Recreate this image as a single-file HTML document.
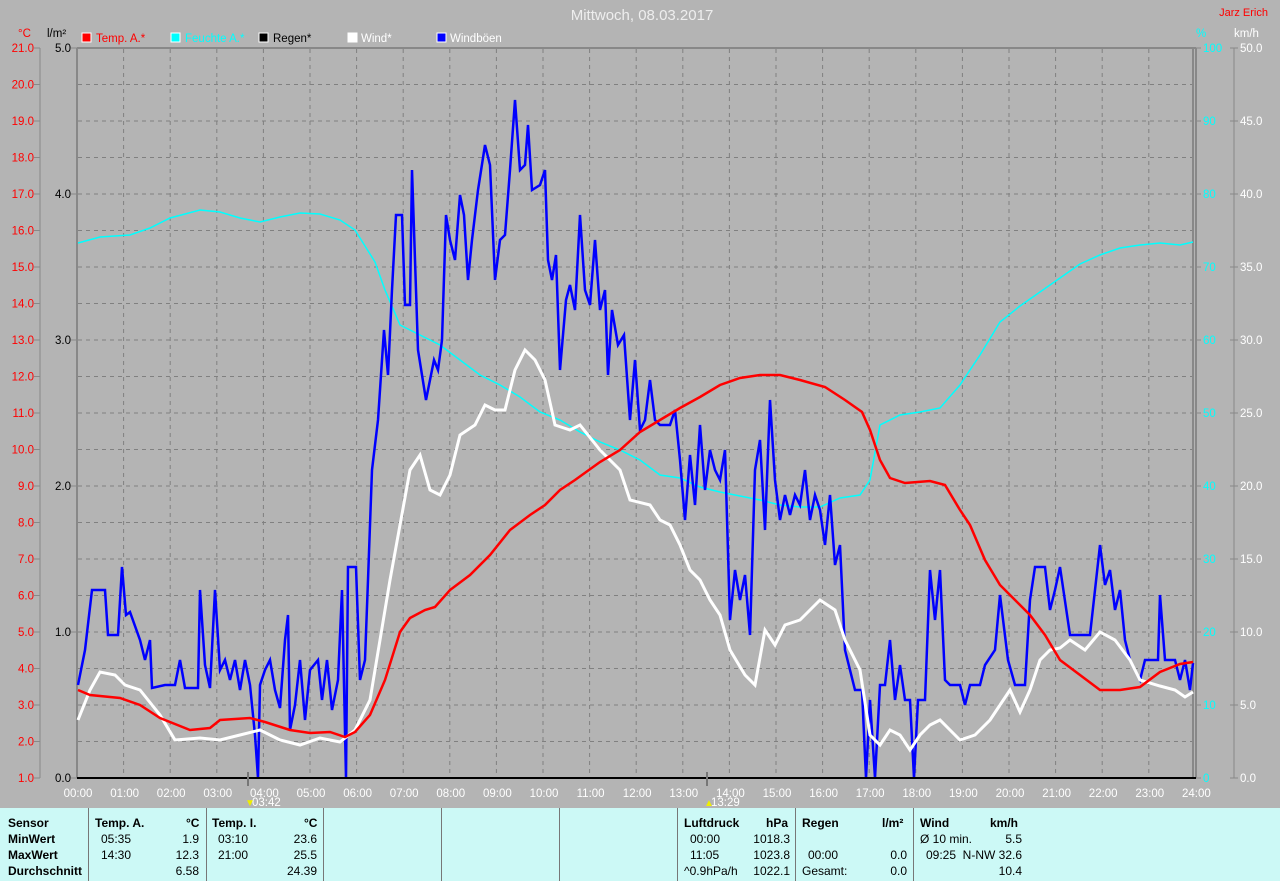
<!DOCTYPE html>
<html><head><meta charset="utf-8"><style>
body{margin:0;width:1280px;height:881px;background:#b4b4b4;overflow:hidden;font-family:"Liberation Sans",sans-serif}
svg{position:absolute;left:0;top:0}
#tbl{position:absolute;left:0;top:808px;width:1280px;height:73px;background:#ccf9f6;font-size:12px;color:#000}
.c{position:absolute;top:0;height:73px;border-left:1px solid #777}
.t{position:absolute;white-space:nowrap}
.b{font-weight:bold}
</style></head><body>
<svg width="1280" height="808" font-family="Liberation Sans, sans-serif" font-size="11.5">
<text x="642" y="20" text-anchor="middle" fill="#eeeeee" font-size="15">Mittwoch, 08.03.2017</text>
<text x="1268" y="16" text-anchor="end" fill="#ff0000" font-size="11">Jarz Erich</text>
<text x="18" y="37" fill="#ff0000">°C</text>
<text x="47" y="37" fill="#000">l/m²</text>
<text x="1196" y="37" fill="#00ffff">%</text>
<text x="1234" y="37" fill="#fff">km/h</text>
<rect x="82" y="33" width="9" height="9" fill="#ff0000" stroke="#fff"/><text x="96" y="42" fill="#ff0000">Temp. A.*</text>
<rect x="171" y="33" width="9" height="9" fill="#00ffff" stroke="#fff"/><text x="185" y="42" fill="#00ffff">Feuchte A.*</text>
<rect x="259" y="33" width="9" height="9" fill="#000" stroke="#fff"/><text x="273" y="42" fill="#000">Regen*</text>
<rect x="348" y="33" width="9" height="9" fill="#fff" stroke="#fff"/><text x="361" y="42" fill="#fff">Wind*</text>
<rect x="437" y="33" width="9" height="9" fill="#0000ff" stroke="#fff"/><text x="450" y="42" fill="#fff">Windböen</text>
<g id="grid" stroke="#808080" stroke-dasharray="4,4" stroke-width="1">
</g>
<line x1="77" y1="48" x2="1196" y2="48" stroke="#888" stroke-width="2"/>
<line x1="77" y1="48" x2="77" y2="778" stroke="#888" stroke-width="2"/>
<line x1="1193" y1="48" x2="1193" y2="778" stroke="#888" stroke-width="2"/>
<line x1="1196" y1="48" x2="1196" y2="778" stroke="#888" stroke-width="2"/>
<line x1="40" y1="48" x2="40" y2="778" stroke="#888"/>
<line x1="1234" y1="48" x2="1234" y2="778" stroke="#888"/>
<g id="ax"></g>
<polyline fill="none" stroke="#00ffff" stroke-width="1.5" points="78,243 100,237 130,235 150,228 170,218 200,210 220,212 240,218 260,222 280,217 300,213 320,214 340,220 355,230 375,262 385,290 400,325 420,335 440,345 460,360 480,375 500,385 520,397 540,412 560,420 580,432 600,442 620,450 640,460 660,475 680,478 700,487 720,492 740,496 760,500 780,505 800,507 820,507 840,498 860,495 870,480 880,425 900,415 920,412 940,408 960,385 980,355 1000,322 1020,306 1040,292 1060,278 1080,264 1100,255 1120,248 1140,245 1160,243 1180,245 1193,242"/>
<polyline fill="none" stroke="#0000ff" stroke-width="2.5" points="78,685 85,650 92,590 105,590 108,635 118,635 122,567 126,615 130,612 140,640 145,660 150,640 152,688 165,685 175,685 180,660 185,688 198,688 200,590 205,665 210,688 215,590 220,670 225,660 230,680 235,660 240,690 245,660 250,685 255,735 258,778 260,685 265,670 270,660 275,690 280,708 285,640 288,615 290,730 295,705 300,660 305,720 310,670 318,660 322,700 327,660 332,710 338,680 342,590 346,778 348,567 356,567 360,680 365,660 368,580 372,470 378,420 384,330 388,375 392,290 396,215 402,215 405,305 410,305 412,170 418,350 422,375 426,400 430,380 434,360 438,370 442,340 446,215 450,240 455,260 460,195 464,215 468,280 472,240 478,190 485,145 490,165 495,280 500,240 505,235 510,170 515,100 520,170 525,165 528,125 532,190 540,185 545,170 548,260 552,280 556,255 560,370 566,300 570,285 575,310 580,215 585,290 590,305 595,240 600,310 605,290 608,375 612,310 618,345 624,335 630,420 635,360 640,430 645,420 650,380 655,420 660,425 670,425 675,410 680,460 685,520 690,455 695,505 700,425 705,490 710,450 715,470 720,480 725,450 730,620 735,570 740,600 745,575 750,635 755,470 760,440 765,530 770,400 775,480 780,520 785,495 790,515 795,495 800,505 805,470 810,520 815,495 820,510 825,545 830,495 835,565 840,545 845,650 855,690 862,690 866,778 870,700 875,778 880,685 885,685 890,640 895,700 900,665 905,700 910,700 914,778 918,700 925,700 930,570 935,620 940,570 945,680 950,685 960,685 965,705 970,685 980,685 985,665 995,650 1000,595 1008,660 1015,685 1025,685 1030,600 1035,567 1045,567 1050,610 1055,590 1060,567 1070,635 1090,635 1095,590 1100,545 1105,585 1110,570 1115,610 1120,590 1125,640 1130,660 1140,680 1145,660 1158,660 1160,595 1165,660 1175,660 1180,680 1185,660 1190,690 1193,663"/>
<polyline fill="none" stroke="#ffffff" stroke-width="3" points="78,720 90,690 100,672 115,675 125,685 140,690 160,715 175,740 200,738 220,740 240,735 260,730 280,740 300,745 320,738 340,742 355,730 370,700 380,640 390,580 400,525 410,470 420,455 430,490 440,495 450,475 460,435 475,425 485,405 495,410 505,410 515,370 525,350 535,360 545,380 555,425 570,430 580,425 600,450 620,470 630,500 650,505 660,520 670,525 680,545 690,570 700,580 710,600 720,615 730,650 745,675 755,685 765,630 775,645 785,625 800,620 810,610 820,600 835,610 845,640 860,670 870,735 880,745 890,730 900,735 910,750 920,735 930,725 940,720 950,730 960,740 975,735 990,720 1000,705 1010,690 1020,712 1030,690 1040,660 1050,650 1060,648 1070,640 1085,650 1100,632 1115,640 1130,660 1140,680 1160,686 1175,690 1185,697 1193,692"/>
<polyline fill="none" stroke="#ff0000" stroke-width="2.5" points="78,690 90,695 120,698 140,705 160,718 190,730 210,728 220,720 250,718 265,722 290,730 310,733 330,732 345,737 355,732 370,715 385,680 400,632 410,618 425,610 435,607 450,590 470,575 490,555 510,530 530,515 545,505 560,490 575,480 600,462 620,450 640,432 660,420 680,408 700,397 720,385 740,378 760,375 780,375 800,380 825,387 845,400 862,412 870,430 880,460 890,478 905,483 930,481 945,485 960,510 970,525 985,560 1000,585 1015,600 1030,615 1045,635 1060,660 1080,675 1100,690 1120,690 1140,687 1160,672 1180,664 1193,662"/>
<line x1="77" y1="778" x2="1196" y2="778" stroke="#000" stroke-width="2"/>
<line x1="248" y1="772" x2="248" y2="786" stroke="#777" stroke-width="2"/>
<line x1="707" y1="772" x2="707" y2="786" stroke="#777" stroke-width="2"/>
<text x="252" y="806" fill="#fff">03:42</text><text x="245" y="806" fill="#ee0" font-size="10">▼</text>
<text x="711" y="806" fill="#fff">13:29</text><text x="704" y="806" fill="#ee0" font-size="10">▲</text>
</svg>
<div id="tbl">
<div class="c" style="left:88px"></div><div class="c" style="left:206px"></div><div class="c" style="left:323px"></div><div class="c" style="left:441px"></div><div class="c" style="left:559px"></div><div class="c" style="left:677px"></div><div class="c" style="left:795px"></div><div class="c" style="left:913px"></div>
<div class="t b" style="left:8px;top:8px">Sensor</div><div class="t b" style="left:8px;top:24px">MinWert</div><div class="t b" style="left:8px;top:40px">MaxWert</div><div class="t b" style="left:8px;top:56px">Durchschnitt</div>
<div class="t b" style="left:95px;top:8px">Temp. A.</div><div class="t b" style="left:186px;top:8px">°C</div>
<div class="t" style="left:101px;top:24px">05:35</div><div class="t" style="right:1081px;top:24px">1.9</div>
<div class="t" style="left:101px;top:40px">14:30</div><div class="t" style="right:1081px;top:40px">12.3</div>
<div class="t" style="right:1081px;top:56px">6.58</div>
<div class="t b" style="left:212px;top:8px">Temp. I.</div><div class="t b" style="left:304px;top:8px">°C</div>
<div class="t" style="left:218px;top:24px">03:10</div><div class="t" style="right:963px;top:24px">23.6</div>
<div class="t" style="left:218px;top:40px">21:00</div><div class="t" style="right:963px;top:40px">25.5</div>
<div class="t" style="right:963px;top:56px">24.39</div>
<div class="t b" style="left:684px;top:8px">Luftdruck</div><div class="t b" style="left:766px;top:8px">hPa</div>
<div class="t" style="left:690px;top:24px">00:00</div><div class="t" style="right:490px;top:24px">1018.3</div>
<div class="t" style="left:690px;top:40px">11:05</div><div class="t" style="right:490px;top:40px">1023.8</div>
<div class="t" style="left:684px;top:56px">^0.9hPa/h</div><div class="t" style="right:490px;top:56px">1022.1</div>
<div class="t b" style="left:802px;top:8px">Regen</div><div class="t b" style="left:882px;top:8px">l/m²</div>
<div class="t" style="left:808px;top:40px">00:00</div><div class="t" style="right:373px;top:40px">0.0</div>
<div class="t" style="left:802px;top:56px">Gesamt:</div><div class="t" style="right:373px;top:56px">0.0</div>
<div class="t b" style="left:920px;top:8px">Wind</div><div class="t b" style="left:990px;top:8px">km/h</div>
<div class="t" style="left:920px;top:24px">Ø 10 min.</div><div class="t" style="right:258px;top:24px">5.5</div>
<div class="t" style="left:926px;top:40px">09:25</div><div class="t" style="right:258px;top:40px">N-NW 32.6</div>
<div class="t" style="right:258px;top:56px">10.4</div>
</div>
<script>
var ns="http://www.w3.org/2000/svg",g=document.getElementById('grid'),ax=document.getElementById('ax');
function el(p,t,a,txt){var e=document.createElementNS(ns,t);for(var k in a)e.setAttribute(k,a[k]);if(txt)e.textContent=txt;p.appendChild(e);}
for(var h=1;h<24;h++){var x=77+h*46.6;el(g,'line',{x1:x,y1:49,x2:x,y2:777});}
for(var h=0;h<=24;h++){var x=77+h*46.6;el(ax,'text',{x:x+1,y:797,'text-anchor':'middle',fill:'#fff'},(h<10?'0':'')+h+':00');}
for(var i=0;i<=20;i++){var y=778-i*36.5;if(i>0&&i<20)el(g,'line',{x1:78,y1:y,x2:1192,y2:y});
el(ax,'text',{x:34,y:y+4,'text-anchor':'end',fill:'#f00'},(i+1)+'.0');el(ax,'line',{x1:34,y1:y,x2:40,y2:y,stroke:'#888'});}
for(var i=0;i<=5;i++){var y=778-i*146;el(ax,'text',{x:71,y:y+4,'text-anchor':'end',fill:'#000'},i+'.0');el(ax,'line',{x1:71,y1:y,x2:77,y2:y,stroke:'#888'});}
for(var i=0;i<=10;i++){var y=778-i*73;el(ax,'text',{x:1203,y:y+4,fill:'#0ff'},String(i*10));el(ax,'line',{x1:1196,y1:y,x2:1201,y2:y,stroke:'#888'});
el(ax,'text',{x:1240,y:y+4,fill:'#fff'},(i*5).toFixed(1));el(ax,'line',{x1:1230,y1:y,x2:1238,y2:y,stroke:'#888'});}
</script>
</body></html>
